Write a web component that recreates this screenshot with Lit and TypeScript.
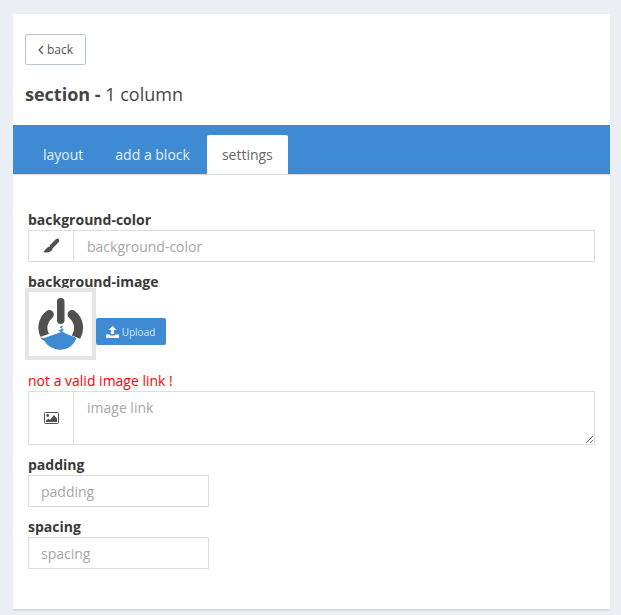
import { LitElement, html, css } from 'lit';
import { customElement } from 'lit/decorators.js';

@customElement('app-root')
export class AppRoot extends LitElement {
  static styles = css`
    :host {
      display: block;
      min-height: 615px;
      background: #ebeff4;
      padding: 14px 11px 0 13px;
      box-sizing: border-box;
      font-family: 'Open Sans', sans-serif;
      color: #3f3f3f;
    }
    * {
      box-sizing: border-box;
    }
    .card {
      background: #fff;
      border-bottom: 2px solid #d8dce1;
      height: 597px;
    }
    .head {
      height: 111px;
      padding: 20px 12px 0;
    }
    .back {
      display: flex;
      align-items: center;
      justify-content: center;
      gap: 3px;
      width: 61px;
      height: 31px;
      border: 1px solid #b9c6d2;
      border-radius: 2px;
      background: #fff;
      padding: 0;
      font: 12px 'Open Sans', sans-serif;
      color: #555;
    }
    .title {
      margin: 17px 0 0;
      font-size: 18px;
      line-height: 25px;
      font-weight: 400;
      color: #444;
    }
    .title b {
      font-weight: 700;
    }
    .tabs {
      display: flex;
      align-items: flex-end;
      height: 50px;
      padding-left: 14px;
      background: #3e8bd3;
      border-bottom: 1px solid #d4dae0;
    }
    .tab {
      height: 39px;
      padding: 0 16px;
      font-size: 14px;
      line-height: 40px;
      color: #e4effa;
    }
    .tab.active {
      background: #fff;
      border-radius: 2px 2px 0 0;
      color: #666;
      padding: 0 15px;
      margin-left: 1px;
    }
    .form {
      padding: 35px 15px 0;
    }
    label {
      display: block;
      font-size: 14px;
      line-height: 19px;
      font-weight: 700;
      color: #3a3a3a;
    }
    .group {
      display: flex;
      width: 567px;
      border: 1px solid #dcdcdc;
    }
    label + .group {
      margin-top: 1px;
    }
    .addon {
      display: flex;
      align-items: center;
      justify-content: center;
      flex: none;
      width: 45px;
      border-right: 1px solid #dcdcdc;
    }
    input,
    textarea {
      display: block;
      border: 0;
      outline: 0;
      background: #fff;
      font: 14px 'Open Sans', sans-serif;
      color: #444;
    }
    input::placeholder,
    textarea::placeholder {
      color: #a6a6a6;
      opacity: 1;
    }
    .group input {
      flex: 1;
      height: 30px;
      padding: 0 13px;
    }
    .group textarea {
      flex: 1;
      height: 52px;
      padding: 6px 13px;
      resize: vertical;
    }
    .image-label {
      margin-top: 10px;
    }
    .image-row {
      display: flex;
      align-items: flex-start;
      margin: -3px 0 0 -3px;
    }
    .thumb {
      display: flex;
      align-items: center;
      justify-content: center;
      width: 71px;
      height: 72px;
      border: 4px solid #e5e5e5;
    }
    .upload {
      display: flex;
      align-items: center;
      justify-content: center;
      gap: 3px;
      width: 70px;
      height: 27px;
      margin-top: 30px;
      border: 0;
      border-radius: 2px;
      padding: 0 1px 0 0;
      background: #3e8bd3;
      color: #d6e6f6;
      font: 10px 'Open Sans', sans-serif;
    }
    .error {
      margin: 11px 0 1px;
      font-size: 14px;
      line-height: 19px;
      color: #f00;
    }
    .field {
      margin-top: 10px;
    }
    .solo {
      width: 181px;
      height: 32px;
      margin-top: 1px;
      padding: 0 12px;
      border: 1px solid #dcdcdc;
    }
  `;

  render() {
    return html`
      <div class="card">
        <div class="head">
          <button class="back">
            <svg width="6" height="10" viewBox="0 0 6 10">
              <path d="M5 1 1 5l4 4" fill="none" stroke="#555" stroke-width="1.2" />
            </svg>
            back
          </button>
          <h1 class="title"><b>section -</b> 1 column</h1>
        </div>

        <div class="tabs">
          <div class="tab">layout</div>
          <div class="tab">add a block</div>
          <div class="tab active">settings</div>
        </div>

        <div class="form">
          <label>background-color</label>
          <div class="group">
            <div class="addon">
              <svg width="16" height="16" viewBox="0 0 16 16">
                <path d="M14.500 2.500 9 8" fill="none" stroke="#505050" stroke-width="4" stroke-linecap="round" />
                <path d="M6.500 8.500c2-.8 3.500.6 3 2.500-.5 2.400-3.500 3.800-7.500 3.500-1.200-.1-1.300-.9-.6-1.700 1.500-1.800 2.600-3.500 5.100-4.300Z" fill="#505050" />
              </svg>
            </div>
            <input placeholder="background-color" />
          </div>

          <label class="image-label">background-image</label>
          <div class="image-row">
            <div class="thumb">
              <svg width="46" height="54" viewBox="0 0 46 54">
                <rect x="19" y="1" width="7.500" height="26" rx="3.700" fill="#505050" />
                <path d="M11.300 17.500A17 17 0 0 0 7 39" fill="none" stroke="#505050" stroke-width="9" stroke-linecap="round" />
                <path d="M34.100 17.500A17 17 0 0 1 38.500 39" fill="none" stroke="#505050" stroke-width="9" stroke-linecap="round" />
                <path d="M2 40 18 34.500l3-1-3-1.500 4-1.500-2.500-2H25l-1.500 2 2.500 1.500-2 1.500 3 2 3 1.500 14 5.500-4 5-5 3-8 1-7-1-6-3-5-4.500Z" fill="#fff" />
                <path d="M4.700 41.500 19 36.500l4-1.500-3-1.500 4-1.500-2.500-2 3-1.500 .5 1-1.500 1.500 2.500 1.500-2 1.800 3 2 3 1.200 8.500 3.500C35.500 48.500 30 52.700 22 52.700S8.500 48 4.700 41.500Z" fill="#3e8bd3" />
              </svg>
            </div>
            <button class="upload">
              <svg width="13" height="12" viewBox="0 0 13 12">
                <path d="M6.500 0 10.500 4H8.100V8H4.900V4H2.500Z" fill="#fff" />
                <path d="M0 8.500h3.900v1h5.200v-1H13V12H0Z" fill="#fff" />
              </svg>
              Upload
            </button>
          </div>

          <p class="error">not a valid image link !</p>
          <div class="group">
            <div class="addon">
              <svg width="15" height="12" viewBox="0 0 15 12">
                <rect x=".5" y=".5" width="14" height="11" rx="1" fill="none" stroke="#505050" />
                <circle cx="3.700" cy="3.500" r="1.400" fill="#505050" />
                <path d="M2 10V8.500l2.500-1.800L6 7.700 10 3l3 3.500V10Z" fill="#505050" />
              </svg>
            </div>
            <textarea placeholder="image link"></textarea>
          </div>

          <div class="field">
            <label>padding</label>
            <input class="solo" placeholder="padding" />
          </div>
          <div class="field">
            <label>spacing</label>
            <input class="solo" placeholder="spacing" />
          </div>
        </div>
      </div>
    `;
  }
}
